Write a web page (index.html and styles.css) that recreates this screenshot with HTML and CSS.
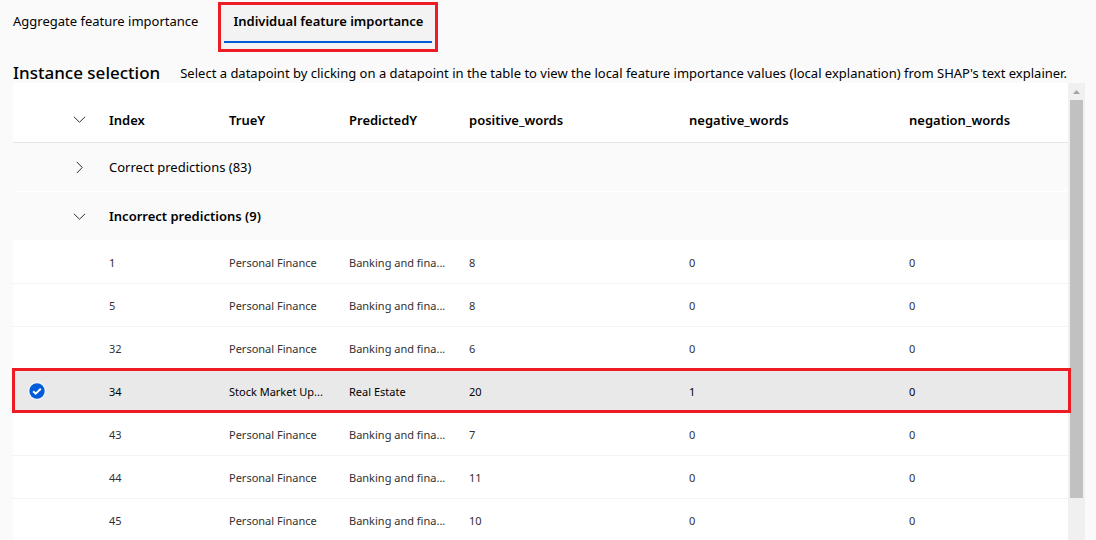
FILE: index.html
```html
<!DOCTYPE html>
<html lang="en">
<head>
<meta charset="utf-8">
<meta name="viewport" content="width=device-width, initial-scale=1">
<title>Individual feature importance</title>
<link rel="stylesheet" href="styles.css">
</head>
<body>
<main class="page">
  <div class="tabs" role="tablist">
    <button class="tab" type="button" role="tab" aria-selected="false">Aggregate feature importance</button>
    <div class="callout">
      <button class="tab tab-active" type="button" role="tab" aria-selected="true">Individual feature importance</button>
    </div>
  </div>
  <header class="intro">
    <h1 class="title">Instance selection</h1>
    <p class="hint">Select a datapoint by clicking on a datapoint in the table to view the local feature importance values (local explanation) from SHAP's text explainer.</p>
  </header>
  <section class="panel">
    <div class="grid-area">
      <table class="grid">
        <colgroup>
          <col class="col-check"><col class="col-toggle"><col class="col-label"><col class="col-label"><col class="col-label"><col class="col-words"><col class="col-words"><col>
        </colgroup>
        <thead>
          <tr class="head">
            <th></th>
            <th class="toggle-cell"><button class="toggle" type="button" aria-label="Toggle all groups"><svg class="chevron" viewBox="0 0 13 13"><path d="M.9 3.8l5.6 5.4 5.6-5.4"/></svg></button></th>
            <th>Index</th><th>TrueY</th><th>PredictedY</th><th>positive_words</th><th>negative_words</th><th>negation_words</th>
          </tr>
        </thead>
        <tbody>
          <tr class="group">
            <td></td>
            <td class="toggle-cell"><button class="toggle" type="button" aria-label="Expand correct predictions"><svg class="chevron" viewBox="0 0 13 13"><path d="M3.8 .9l5.4 5.6-5.4 5.6"/></svg></button></td>
            <td colspan="6">Correct predictions (83)</td>
          </tr>
          <tr class="group group-open">
            <td></td>
            <td class="toggle-cell"><button class="toggle" type="button" aria-label="Collapse incorrect predictions"><svg class="chevron" viewBox="0 0 13 13"><path d="M.9 3.8l5.6 5.4 5.6-5.4"/></svg></button></td>
            <td colspan="6">Incorrect predictions (9)</td>
          </tr>
          <tr class="row"><td class="check-cell"><input class="pick" type="radio" name="pick" aria-label="Select 1"></td><td></td><td>1</td><td>Personal Finance</td><td>Banking and fina...</td><td>8</td><td>0</td><td>0</td></tr>
          <tr class="row"><td class="check-cell"><input class="pick" type="radio" name="pick" aria-label="Select 5"></td><td></td><td>5</td><td>Personal Finance</td><td>Banking and fina...</td><td>8</td><td>0</td><td>0</td></tr>
          <tr class="row"><td class="check-cell"><input class="pick" type="radio" name="pick" aria-label="Select 32"></td><td></td><td>32</td><td>Personal Finance</td><td>Banking and fina...</td><td>6</td><td>0</td><td>0</td></tr>
          <tr class="row row-selected"><td class="check-cell"><label class="mark"><input class="pick" type="radio" name="pick" aria-label="Select 34" checked><svg class="mark-icon" viewBox="0 0 18 18"><circle class="mark-halo" cx="9" cy="9" r="9"/><circle class="mark-disc" cx="9" cy="9" r="7.7"/><path class="mark-tick" d="M5.2 9.2l2.5 2.5 5.1-5"/></svg></label></td><td></td><td>34</td><td>Stock Market Up...</td><td>Real Estate</td><td>20</td><td>1</td><td>0</td></tr>
          <tr class="row"><td class="check-cell"><input class="pick" type="radio" name="pick" aria-label="Select 43"></td><td></td><td>43</td><td>Personal Finance</td><td>Banking and fina...</td><td>7</td><td>0</td><td>0</td></tr>
          <tr class="row"><td class="check-cell"><input class="pick" type="radio" name="pick" aria-label="Select 44"></td><td></td><td>44</td><td>Personal Finance</td><td>Banking and fina...</td><td>11</td><td>0</td><td>0</td></tr>
          <tr class="row"><td class="check-cell"><input class="pick" type="radio" name="pick" aria-label="Select 45"></td><td></td><td>45</td><td>Personal Finance</td><td>Banking and fina...</td><td>10</td><td>0</td><td>0</td></tr>
        </tbody>
      </table>
    </div>
    <div class="scrollbar" aria-hidden="true">
      <svg class="scroll-arrow" viewBox="0 0 17 17"><path d="M5 11h7L8.500 7z"/></svg>
      <div class="track"><div class="thumb"></div></div>
    </div>
  </section>
</main>
</body>
</html>
```
FILE: styles.css
```css
* { box-sizing: border-box; }
body {
  margin: 0;
  background: #fafafa;
  color: #000;
  font-family: "Segoe UI", "Noto Sans", "Open Sans", sans-serif;
  font-size: 13px;
  line-height: 20px;
}
button { font: inherit; color: inherit; border: 0; background: none; padding: 0; }

.page {
  height: 100vh;
  display: flex;
  flex-direction: column;
  overflow: hidden;
  padding: 2px 11px 0 13px;
}
.tabs { display: flex; align-items: flex-start; gap: 20px; }
.tab { height: 38px; white-space: nowrap; }
.callout {
  height: 50px;
  padding: 0 3px;
  border: 3px solid #ed1c24;
  background: #f3f3f3;
}
.tab-active {
  padding: 0 9px 4px;
  border-bottom: 2px solid #015cda;
  font-weight: 600;
}

.intro { display: flex; align-items: center; gap: 20px; height: 31px; padding-top: 10px; white-space: nowrap; }
.title { margin: 0; font-size: 17px; font-weight: 500; }
.hint { margin: 0; }

.panel { display: flex; flex: 1; min-height: 0; }
.grid-area { flex: 1; min-width: 0; background: #fff; }
.grid { width: 100%; table-layout: fixed; border-collapse: separate; border-spacing: 0; }
.col-check { width: 48px; }
.col-toggle { width: 36px; }
.col-label { width: 120px; }
.col-words { width: 220px; }
.grid th, .grid td { padding: 0 0 0 12px; text-align: left; vertical-align: middle; white-space: nowrap; }
.grid .toggle-cell, .grid .check-cell { padding: 0; text-align: center; }
.head th { height: 60px; border-bottom: 1px solid #e5e5e5; font-weight: 600; }
.grid .head .toggle-cell, .grid .head th { padding-top: 14px; }
.group td { height: 49px; background: #fafafa; border-bottom: 1px solid #fff; }
.group-open { font-weight: 600; }
.grid .row td { height: 43px; padding-top: 2px; border-bottom: 1px solid #f3f3f3; color: #323130; font-size: 11px; }
.grid .row .check-cell { padding-top: 0; }
.row-selected { position: relative; }
.grid .row-selected td { background: #e9e9e9; color: #000; }
.row-selected td:last-child::after {
  content: "";
  position: absolute;
  inset: -2px -3px 0 -1px;
  border: 3px solid #ed1c24;
  pointer-events: none;
}

.toggle, .mark { display: grid; place-items: center; width: 100%; }
.chevron { width: 13px; height: 13px; fill: none; stroke: #323130; }
.pick { appearance: none; width: 18px; height: 18px; margin: 0; vertical-align: middle; }
.mark .pick, .mark-icon { grid-area: 1 / 1; }
.mark-icon { width: 18px; height: 18px; pointer-events: none; }
.mark-halo { fill: #f5f8fe; }
.mark-disc { fill: #015cda; }
.mark-tick { fill: none; stroke: #fff; stroke-width: 2; }

.scrollbar { width: 17px; display: flex; flex-direction: column; background: #f0f0f0; }
.scroll-arrow { width: 17px; height: 17px; fill: #a3a3a3; }
.track { flex: 1; padding: 0 2px; }
.thumb { height: 90.5%; background: #c1c1c1; }
```
